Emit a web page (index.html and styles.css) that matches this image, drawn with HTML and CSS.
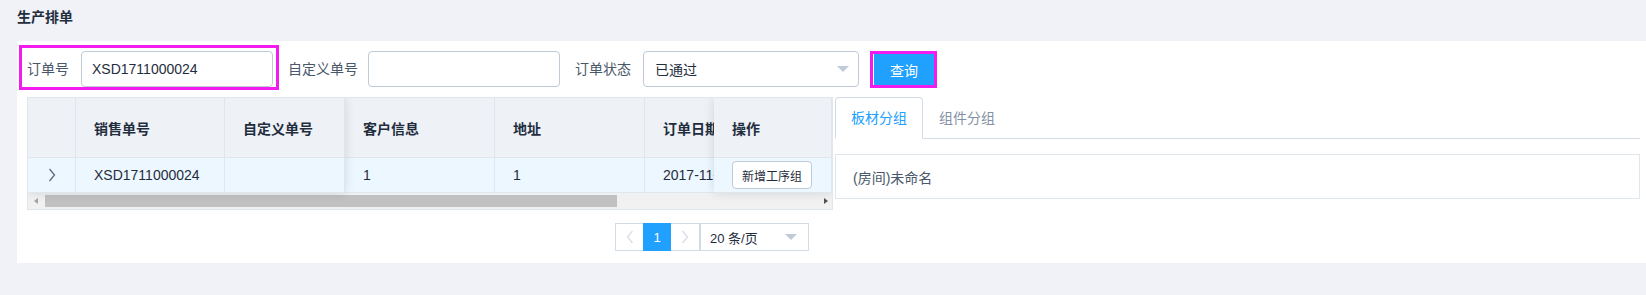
FILE: index.html
```html
<!DOCTYPE html>
<html lang="zh-CN">
<head>
<meta charset="utf-8">
<title>生产排单</title>
<link rel="stylesheet" href="styles.css">
</head>
<body>
<h1 class="title">生产排单</h1>
<div class="panel">
  <div class="toolbar">
    <div class="hl hl-field">
      <label class="lbl">订单号</label>
      <div class="input">XSD1711000024</div>
    </div>
    <div class="field field-custom">
      <label class="lbl">自定义单号</label>
      <div class="input"></div>
    </div>
    <div class="field field-status">
      <label class="lbl">订单状态</label>
      <div class="select"><span>已通过</span><i class="caret"></i></div>
    </div>
    <div class="hl hl-btn"><button class="btn-primary">查询</button></div>
  </div>

  <div class="main">
    <div class="left">
      <div class="table">
        <div class="tbody-wrap">
          <div class="fixed-left">
            <div class="th"></div>
            <div class="th">销售单号</div>
            <div class="th">自定义单号</div>
            <div class="td td-expand"><svg width="8" height="14" viewBox="0 0 8 14"><polyline points="1.5,1 6.5,7 1.5,13" fill="none" stroke="#5a6b80" stroke-width="1.3"/></svg></div>
            <div class="td">XSD1711000024</div>
            <div class="td"></div>
          </div>
          <div class="scroll-area">
            <div class="th">客户信息</div>
            <div class="th">地址</div>
            <div class="th">订单日期</div>
            <div class="th">订单状态</div>
            <div class="th"></div>
            <div class="td">1</div>
            <div class="td">1</div>
            <div class="td">2017-11-08</div>
            <div class="td">已通过</div>
            <div class="td"></div>
          </div>
          <div class="fixed-right">
            <div class="th">操作</div>
            <div class="td"><button class="btn-sm">新增工序组</button></div>
          </div>
        </div>
        <div class="hscroll">
          <i class="arr arr-l"></i>
          <div class="thumb"></div>
          <i class="arr arr-r"></i>
        </div>
      </div>

      <div class="pager">
        <button class="pg-btn prev"><svg width="8" height="14" viewBox="0 0 8 14"><polyline points="6.5,1 1.5,7 6.5,13" fill="none" stroke="#d8dee6" stroke-width="1.3"/></svg></button>
        <span class="pg-num">1</span>
        <button class="pg-btn next"><svg width="8" height="14" viewBox="0 0 8 14"><polyline points="1.5,1 6.5,7 1.5,13" fill="none" stroke="#d8dee6" stroke-width="1.3"/></svg></button>
        <div class="pg-size"><span>20 条/页</span><i class="caret caret-sm"></i></div>
      </div>
    </div>

    <div class="tabs">
      <div class="tab-bar">
        <div class="tab active">板材分组</div>
        <div class="tab">组件分组</div>
      </div>
      <div class="tab-pane">
        <div class="card">(房间)未命名</div>
      </div>
    </div>
  </div>
</div>
</body>
</html>
```

FILE: styles.css
```css
* { box-sizing: border-box; }

body {
  margin: 0;
  background: #f0f2f7;
  font-family: "Liberation Sans", "Noto Sans CJK SC", sans-serif;
  font-size: 14px;
  color: #1f2d3d;
}

.title {
  margin: 0;
  height: 41px;
  padding: 7px 0 0 17px;
  font-size: 14px;
  line-height: 20px;
  font-weight: bold;
  color: #1f2d3d;
}

.panel {
  margin-left: 17px;
  background: #fff;
  padding: 4px 0 12px 2px;
}

/* toolbar */
.toolbar {
  display: flex;
  align-items: flex-start;
}

.hl { border: 3px solid #f31cee; }

.hl-field {
  display: flex;
  padding: 3px 3px 0 5px;
}

.lbl {
  line-height: 36px;
  color: #48576a;
  margin-right: 12px;
  white-space: nowrap;
}

.input {
  width: 192px;
  height: 36px;
  border: 1px solid #bfcbd9;
  border-radius: 4px;
  padding: 0 10px;
  line-height: 34px;
  color: #1f2d3d;
  background: #fff;
}

.field {
  display: flex;
  margin-top: 6px;
}

.field-custom { margin-left: 9px; }
.field-custom .lbl { margin-right: 10px; }
.field-status { margin-left: 15px; }

.select {
  width: 216px;
  height: 36px;
  border: 1px solid #bfcbd9;
  border-radius: 4px;
  padding: 0 9px 0 11px;
  display: flex;
  align-items: center;
  justify-content: space-between;
  color: #1f2d3d;
}

.caret {
  width: 0;
  height: 0;
  border-left: 6px solid transparent;
  border-right: 6px solid transparent;
  border-top: 6px solid #bfcbd9;
}

.caret-sm {
  border-left-width: 6px;
  border-right-width: 6px;
  border-top-width: 6px;
}

.hl-btn {
  margin-left: 11px;
  margin-top: 6px;
}

.btn-primary {
  display: block;
  width: 61px;
  height: 31px;
  border: 0;
  border-left: 1px solid #fff;
  background: #20a0ff;
  color: #fff;
  font: inherit;
  font-size: 14px;
  padding: 0;
}

/* main */
.main {
  display: flex;
  margin: 7px 0 0 8px;
}

.left { width: 806px; }

.table {
  width: 806px;
  border: 1px solid #dfe6ec;
  overflow: hidden;
}

.tbody-wrap {
  position: relative;
  display: flex;
  height: 95px;
}

.th, .td {
  border-right: 1px solid #dfe6ec;
  border-bottom: 1px solid #dfe6ec;
  padding: 0 18px;
  display: flex;
  align-items: center;
  white-space: nowrap;
  overflow: hidden;
  color: #1f2d3d;
}

.th {
  background: #eef1f6;
  font-weight: bold;
}

.td { background: #edf7ff; }

.td-expand {
  justify-content: center;
  padding: 0;
}

.fixed-left {
  position: relative;
  z-index: 2;
  flex: none;
  display: grid;
  grid-template-columns: 48px 149px 120px;
  grid-template-rows: 60px 35px;
  box-shadow: 0 0 10px rgba(0, 0, 0, 0.12);
}

.scroll-area {
  flex: 1;
  min-width: 0;
  overflow: hidden;
  display: grid;
  grid-template-columns: repeat(5, 150px);
  grid-template-rows: 60px 35px;
}

.fixed-right {
  position: absolute;
  z-index: 3;
  top: 0;
  right: 0;
  width: 118px;
  display: grid;
  grid-template-rows: 60px 35px;
  box-shadow: 0 0 10px rgba(0, 0, 0, 0.12);
}

.btn-sm {
  height: 28px;
  padding: 0 9px;
  border: 1px solid #bfcbd9;
  border-radius: 4px;
  background: #fff;
  color: #1f2d3d;
  font: inherit;
  font-size: 12px;
}

.hscroll {
  height: 16px;
  background: #f1f1f1;
  display: flex;
  align-items: center;
}

.arr {
  width: 0;
  height: 0;
  border-top: 3.5px solid transparent;
  border-bottom: 3.5px solid transparent;
}

.arr-l {
  margin-left: 6px;
  border-right: 4px solid #a3a3a3;
}

.arr-r {
  margin-left: auto;
  margin-right: 4px;
  border-left: 4px solid #505050;
}

.thumb {
  margin-left: 7px;
  width: 572px;
  height: 12px;
  background: #c1c1c1;
}

/* pager */
.pager {
  display: flex;
  margin: 13px 0 0 588px;
  height: 28px;
}

.pg-btn {
  width: 28px;
  height: 28px;
  border: 1px solid #d1dbe5;
  background: #fff;
  display: flex;
  align-items: center;
  justify-content: center;
  padding: 0;
}

.prev { border-right: 0; }
.next { border-left: 0; width: 29px; }

.pg-num {
  width: 28px;
  height: 28px;
  background: #20a0ff;
  color: #fff;
  font-size: 13px;
  display: flex;
  align-items: center;
  justify-content: center;
}

.pg-size {
  width: 109px;
  height: 28px;
  border: 1px solid #d1dbe5;
  padding: 0 11px 0 9px;
  display: flex;
  align-items: center;
  justify-content: space-between;
  font-size: 13px;
  color: #1f2d3d;
}

/* tabs */
.tabs {
  width: 805px;
  margin-left: 2px;
}

.tab-bar {
  display: flex;
  height: 42px;
  border-bottom: 1px solid #d1dbe5;
}

.tab {
  position: relative;
  height: 42px;
  padding: 0 15px;
  border: 1px solid transparent;
  line-height: 40px;
  color: #8391a5;
  white-space: nowrap;
}

.tab.active {
  z-index: 1;
  color: #20a0ff;
  background: #fff;
  border-color: #d1dbe5;
  border-bottom-color: #fff;
  border-radius: 4px 4px 0 0;
}

.tab-pane { margin-top: 15px; }

.card {
  height: 45px;
  border: 1px solid #dfe6ec;
  padding: 0 17px;
  display: flex;
  align-items: center;
  color: #48576a;
}
```
